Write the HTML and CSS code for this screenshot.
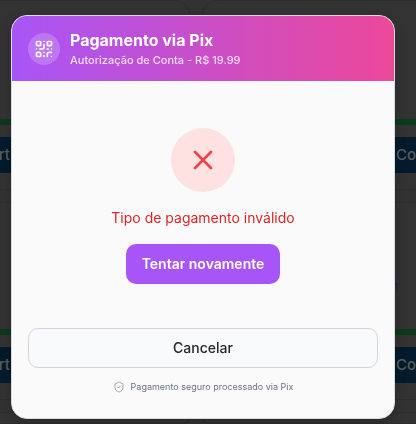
FILE: index.html
```html
<!DOCTYPE html>
<html lang="pt-BR">
<head>
<meta charset="utf-8">
<meta name="viewport" content="width=device-width, initial-scale=1">
<title>Pagamento via Pix</title>
<link rel="stylesheet" href="styles.css">
</head>
<body>
<main class="catalog" inert>
  <article class="card"><div class="progress"></div><div class="action">ert</div></article>
  <article class="card"><div class="note"></div><div class="progress"></div><div class="action">Co</div></article>
  <article class="card"><div class="progress"></div><div class="action">ert</div></article>
  <article class="card"><div class="note">t</div><div class="progress"></div><div class="action">Co</div></article>
  <article class="card card-next"></article>
  <article class="card card-next"></article>
</main>
<div class="overlay">
  <section class="modal" role="dialog" aria-modal="true" aria-labelledby="title">
    <header class="modal-header">
      <span class="badge">
        <svg class="icon-qr" viewBox="0 0 24 24" aria-hidden="true">
          <rect width="5" height="5" x="3" y="3" rx="1"/>
          <rect width="5" height="5" x="16" y="3" rx="1"/>
          <rect width="5" height="5" x="3" y="16" rx="1"/>
          <path d="M21 16h-3a2 2 0 0 0-2 2v3"/>
          <path d="M21 21v.01"/>
          <path d="M12 7v3a2 2 0 0 1-2 2H7"/>
          <path d="M3 12h.01"/>
          <path d="M12 3h.01"/>
          <path d="M12 16v.01"/>
          <path d="M16 12h1"/>
          <path d="M21 12v.01"/>
          <path d="M12 21v-1"/>
        </svg>
      </span>
      <div>
        <h1 class="title" id="title">Pagamento via Pix</h1>
        <p class="subtitle">Autorização de Conta - R$ 19.99</p>
      </div>
    </header>
    <div class="modal-body">
      <div class="status">
        <span class="status-icon">
          <svg class="icon-x" viewBox="0 0 24 24" aria-hidden="true"><path d="M18 6 6 18"/><path d="m6 6 12 12"/></svg>
        </span>
        <p class="message">Tipo de pagamento inválido</p>
        <button class="retry" type="button">Tentar novamente</button>
      </div>
      <button class="cancel" type="button">Cancelar</button>
      <p class="secure">
        <svg class="icon-shield" viewBox="0 0 24 24" aria-hidden="true">
          <path d="M20 13c0 5-3.5 7.5-7.66 8.95a1 1 0 0 1-.67-.01C7.5 20.5 4 18 4 13V6a1 1 0 0 1 1-1c2 0 4.5-1.2 6.24-2.72a1.17 1.17 0 0 1 1.52 0C14.51 3.81 17 5 19 5a1 1 0 0 1 1 1z"/>
          <path d="m9 12 2 2 4-4"/>
        </svg>
        <span>Pagamento seguro processado via Pix</span>
      </p>
    </div>
  </section>
</div>
</body>
</html>
```
FILE: styles.css
```css
* { box-sizing: border-box; }

body {
  margin: 0;
  height: 100vh;
  overflow: hidden;
  background: #323232;
  font-family: Inter, "Liberation Sans", sans-serif;
}

h1, p { margin: 0; }

svg {
  fill: none;
  stroke: currentColor;
  stroke-width: 2;
  stroke-linecap: round;
  stroke-linejoin: round;
}

.catalog {
  display: grid;
  grid-template-columns: 47fr 53fr;
  grid-template-rows: 190px 198px 1fr;
  gap: 12px;
  height: 100vh;
  overflow: hidden;
}

.card {
  display: flex;
  flex-direction: column;
  justify-content: flex-end;
  padding-bottom: 16px;
  border: 1px solid #2d2d2d;
  background: #333;
}

.card:nth-child(odd) {
  border-left: 0;
  border-radius: 0 16px 16px 0;
}

.card:nth-child(even) {
  border-right: 0;
  border-radius: 16px 0 0 16px;
}

.card-next { padding: 0; }

.note {
  margin-bottom: 34px;
  padding-right: 17px;
  color: #12304a;
  font-size: 12px;
  line-height: 16px;
  text-align: right;
}

.progress {
  height: 6px;
  margin-bottom: 12px;
  background: #0b3a1c;
}

.action {
  height: 36px;
  background: #031b2c;
  color: #5c5c5c;
  font-size: 15px;
  font-weight: 500;
  line-height: 36px;
}

.card:nth-child(odd) .action { text-indent: -10px; }
.card:nth-child(even) .action { text-align: right; }

.overlay {
  position: fixed;
  inset: 0;
  display: flex;
  align-items: center;
  justify-content: center;
  padding: 10px 21px 0 11px;
}

.modal {
  width: 100%;
  max-width: 448px;
  overflow: hidden;
  border: 1px solid #d9dbe3;
  border-radius: 16px;
  background: #fafafa;
  box-shadow: 0 4px 12px rgba(0, 0, 0, 0.2);
}

.modal-header {
  display: flex;
  align-items: center;
  gap: 10px;
  padding: 12px 16px;
  background: linear-gradient(90deg, #a855f7, #ec4899);
  color: #fff;
}

.badge {
  display: grid;
  place-items: center;
  width: 32px;
  height: 32px;
  border-radius: 50%;
  background: rgba(255, 255, 255, 0.2);
}

.icon-qr { width: 20px; height: 20px; }

.title {
  font-size: 16px;
  font-weight: 700;
  line-height: 24px;
}

.subtitle {
  color: rgba(255, 255, 255, 0.8);
  font-size: 11px;
  font-weight: 500;
  line-height: 17px;
}

.modal-body { padding: 16px; }

.status {
  display: flex;
  flex-direction: column;
  align-items: center;
  gap: 16px;
  padding: 31px 0 44px;
}

.status-icon {
  display: grid;
  place-items: center;
  width: 64px;
  height: 64px;
  border-radius: 50%;
  background: #fee2e2;
  color: #ef4444;
}

.icon-x { width: 32px; height: 32px; }

.message {
  color: #dc2626;
  font-size: 14px;
  line-height: 20px;
}

.retry,
.cancel {
  height: 40px;
  border-radius: 10px;
  font-family: inherit;
  font-size: 14px;
  line-height: 20px;
}

.retry {
  padding: 0 16px;
  border: 0;
  background: #a855f7;
  color: #fff;
  font-weight: 600;
}

.cancel {
  width: 100%;
  border: 1px solid #d1d5db;
  background: #f9fafb;
  color: #262626;
  font-weight: 500;
}

.secure {
  display: flex;
  align-items: center;
  justify-content: center;
  gap: 6px;
  padding: 12px 0 8px;
  color: #6b7280;
  font-size: 9px;
  line-height: 14px;
}

.icon-shield {
  width: 12px;
  height: 12px;
  color: #9ca3af;
}
```
